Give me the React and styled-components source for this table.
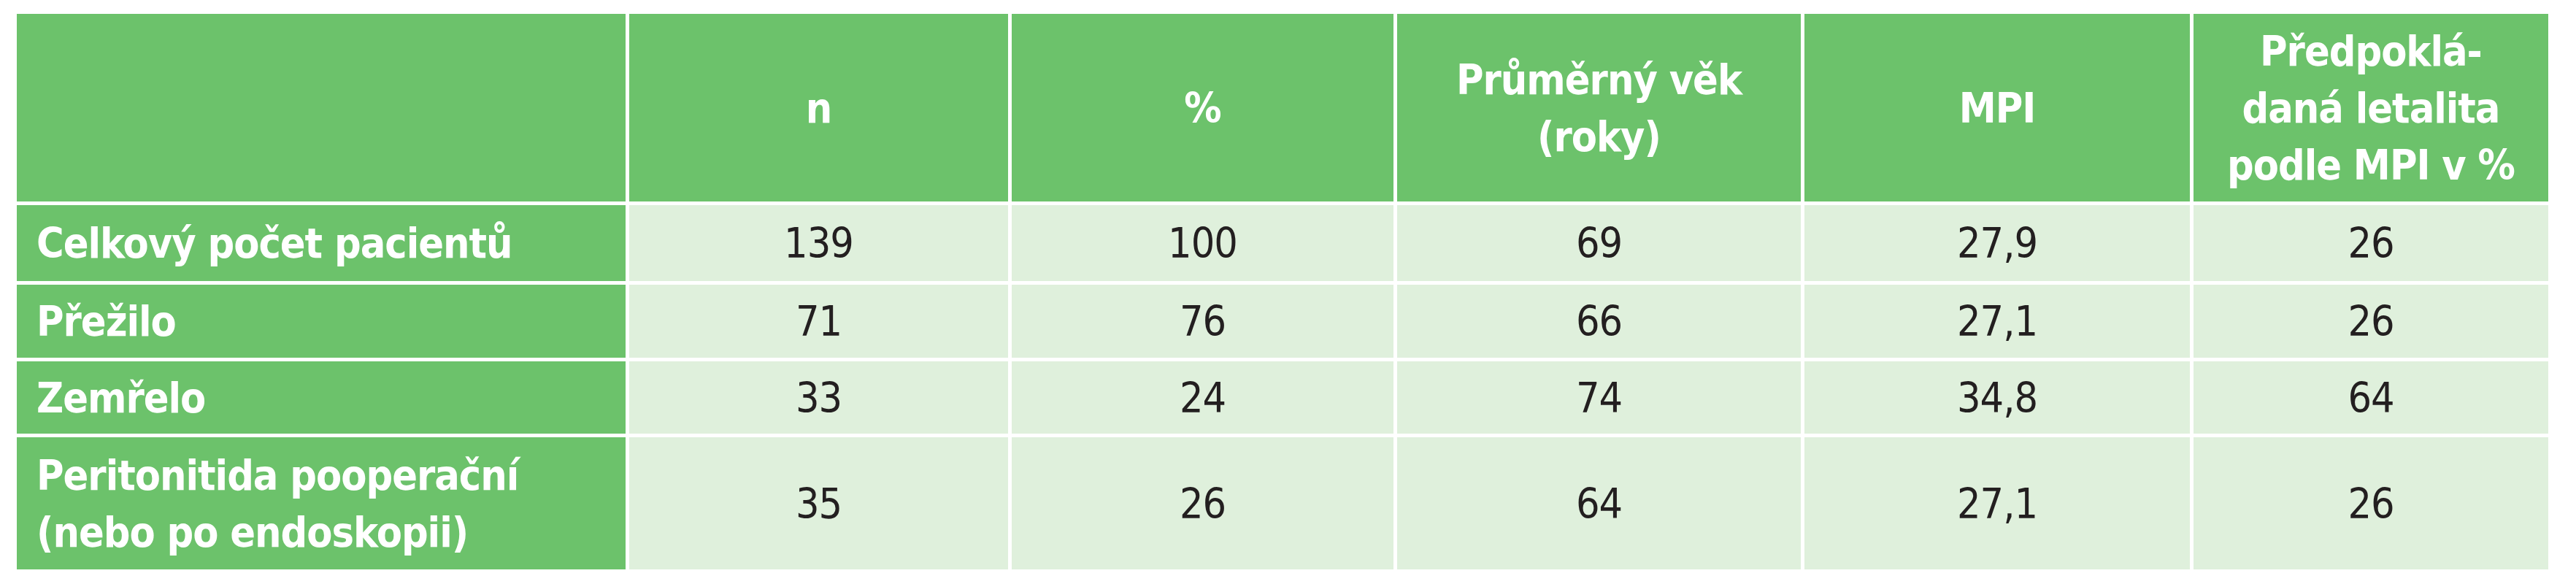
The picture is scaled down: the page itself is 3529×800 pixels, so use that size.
import React from "react";
import styled, { createGlobalStyle } from "styled-components";

const rows = [
  { label: ["Celkový počet pacientů"], values: ["139", "100", "69", "27,9", "26"] },
  { label: ["Přežilo"], values: ["71", "76", "66", "27,1", "26"] },
  { label: ["Zemřelo"], values: ["33", "24", "74", "34,8", "64"] },
  {
    label: ["Peritonitida pooperační", "(nebo po endoskopii)"],
    values: ["35", "26", "64", "27,1", "26"],
  },
];

const headers = [
  ["n"],
  ["%"],
  ["Průměrný věk", "(roky)"],
  ["MPI"],
  ["Předpoklá-", "daná letalita", "podle MPI v %"],
];

const Lines = ({ lines }) =>
  lines.map((line, i) => (
    <React.Fragment key={i}>
      {i > 0 && <br />}
      {line}
    </React.Fragment>
  ));

const App = () => {
  return (
    <>
      <GlobalStyle />
      <Page>
        <Table>
          <HeadCell />
          {headers.map((h, i) => (
            <HeadCell key={i} $center>
              <Lines lines={h} />
            </HeadCell>
          ))}
          {rows.map((row, r) => (
            <React.Fragment key={r}>
              <HeadCell>
                <Lines lines={row.label} />
              </HeadCell>
              {row.values.map((v, c) => (
                <DataCell key={c}>{v}</DataCell>
              ))}
            </React.Fragment>
          ))}
        </Table>
      </Page>
    </>
  );
};

export default App;

const GlobalStyle = createGlobalStyle`
  body {
    margin: 0;
    background: #ffffff;
    font-family: "DejaVu Sans Condensed", "DejaVu Sans", sans-serif;
  }
`;

const Page = styled.div`
  padding: 19px 0 0 23px;
`;

const Table = styled.div`
  display: grid;
  grid-template-columns: 834px 519px 523px 553px 528px 486px;
  grid-template-rows: 257px 104px 100px 99px 181px;
  column-gap: 5px;
  row-gap: 5px;
`;

const Cell = styled.div`
  display: flex;
  align-items: center;
  font-size: 57px;
  line-height: 78px;
  letter-spacing: -1px;
  white-space: nowrap;
`;

const HeadCell = styled(Cell)`
  background: #6cc26b;
  color: #ffffff;
  font-weight: bold;
  justify-content: ${(p) => (p.$center ? "center" : "flex-start")};
  text-align: ${(p) => (p.$center ? "center" : "left")};
  padding-left: ${(p) => (p.$center ? "0" : "27px")};
`;

const DataCell = styled(Cell)`
  background: #dff0dc;
  color: #231f20;
  justify-content: center;
`;
